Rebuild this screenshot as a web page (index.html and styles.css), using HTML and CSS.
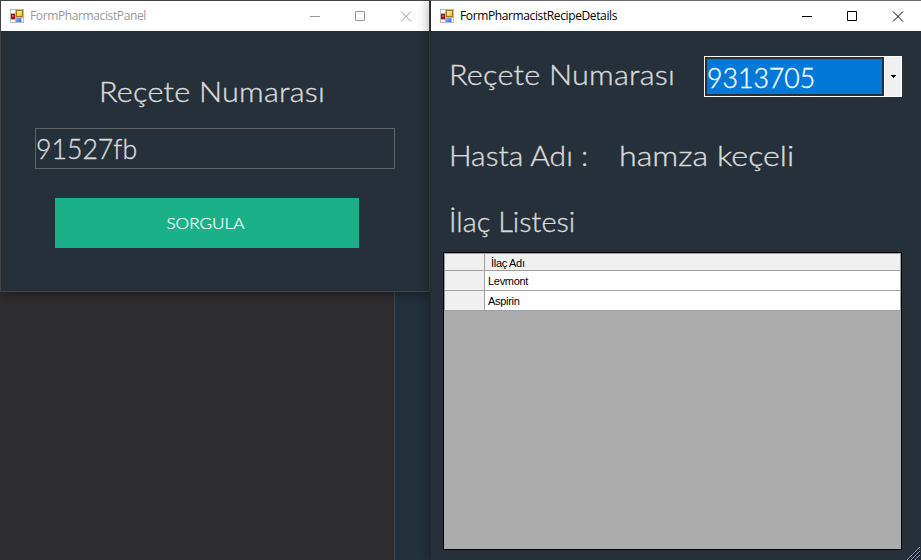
FILE: index.html
```html
<!DOCTYPE html>
<html lang="tr">
<head>
<meta charset="utf-8">
<title>FormPharmacist</title>
<link rel="stylesheet" href="styles.css">
</head>
<body>
<svg class="defs" aria-hidden="true">
  <defs>
    <linearGradient id="gold" x2="1" y2="1"><stop offset="0" stop-color="#fff3a0"/><stop offset="1" stop-color="#f5b820"/></linearGradient>
    <linearGradient id="blue" x2="1" y2="1"><stop offset="0" stop-color="#8cb8f8"/><stop offset="1" stop-color="#356fd8"/></linearGradient>
    <symbol id="form" viewBox="0 0 14 14">
      <path fill="#b9b9b9" d="M0 0h14v14H0z"/>
      <path fill="#fff" d="M1 1h4v3H1zM1 11h4v2H1zM12 9h1v4h-1zM1 5h4v5H1z"/>
      <path fill="#8f1712" d="M1 5h4v5H1z"/><path fill="#dd5345" d="M2 6h2v2H2z"/>
      <path fill="#a87512" d="M6 1h7v7H6z"/><path fill="url(#gold)" d="M7 2h5v5H7z"/>
      <path fill="url(#blue)" d="M6 9h5v4H6z"/>
    </symbol>
    <symbol id="controls" viewBox="0 0 102 11">
      <path fill="none" stroke="currentColor" d="M0 5.5h10M45.500.5h9v9h-9zM91 .5l10 10M101 .5l-10 10"/>
    </symbol>
  </defs>
</svg>
<main class="desktop">
  <div class="backdrop"></div>
  <section class="window panel">
    <header class="titlebar">
      <svg class="app-icon"><use href="#form"/></svg>
      <span class="title">FormPharmacistPanel</span>
      <svg class="controls"><use href="#controls"/></svg>
    </header>
    <div class="panel-body">
      <label class="text wide number-label">Reçete Numarası</label>
      <div class="text input">91527fb</div>
      <div class="button"><span class="wide button-label">SORGULA</span></div>
    </div>
  </section>
  <section class="window details">
    <header class="titlebar">
      <svg class="app-icon"><use href="#form"/></svg>
      <span class="title">FormPharmacistRecipeDetails</span>
      <svg class="controls"><use href="#controls"/></svg>
    </header>
    <div class="details-body">
      <div class="number-row">
        <label class="text wide number-label">Reçete Numarası</label>
        <div class="combo">
          <span class="text combo-value">9313705</span>
          <span class="combo-button"><svg width="5" height="3" shape-rendering="crispEdges"><path d="M0 0h5v1H0zM1 1h3v1H1zM2 2h1v1H2z"/></svg></span>
        </div>
      </div>
      <div class="text patient-row"><span class="wide patient-label">Hasta Adı :</span><span class="wide patient-name">hamza keçeli</span></div>
      <div class="text list-label"><span class="wide list-title">İlaç Listesi</span></div>
      <div class="grid">
        <div class="grid-row head"><span class="cell marker"></span><span class="cell">İlaç Adı</span></div>
        <div class="grid-row"><span class="cell marker"></span><span class="cell">Levmont</span></div>
        <div class="grid-row"><span class="cell marker"></span><span class="cell">Aspirin</span></div>
      </div>
    </div>
    <svg class="grip" viewBox="0 0 13 13"><path stroke="#000" d="M1 13L13 1M5 13l8-8M9 13l4-4"/><path stroke="#8ea5bb" d="M0 13L13 0M4 13l9-9M8 13l5-5"/></svg>
  </section>
</main>
</body>
</html>
```
FILE: styles.css
```css
* { box-sizing: border-box; }
body { margin: 0; }
.defs { position: absolute; width: 0; height: 0; }
.desktop { position: relative; width: 921px; height: 560px; overflow: hidden; background: #23313d; }
.backdrop { width: 395px; height: 560px; background: #2d2d30; border-right: 1px solid #444649; }
.window { position: absolute; top: 0; background: #25303b; border: 1px solid #434447; }
.panel { left: 0; width: 430px; height: 292px; box-shadow: 0 2px 10px rgba(0,0,0,.4); }
.details { left: 430px; width: 492px; height: 562px; border-color: #6c6a6c #25303b #25303b #26292c; box-shadow: 0 0 12px rgba(0,0,0,.4); }
.titlebar { display: flex; align-items: center; height: 30px; padding: 0 17px 0 9px; background: #fff; font: 12px/30px "Open Sans", "Noto Sans", sans-serif; color: #000; }
.app-icon { width: 14px; height: 14px; margin-right: 6px; shape-rendering: crispEdges; }
.title { letter-spacing: -0.38px; }
.controls { width: 102px; height: 11px; margin-left: auto; }
.panel .titlebar { color: #999; }

.text { font: 300 26.67px/40px Lato, "Open Sans", sans-serif; font-variant-ligatures: none; color: #d9d9d9; white-space: nowrap; -webkit-text-stroke: .35px currentColor; }
/* Widened letterforms, close to a geometric sans */
.wide { display: inline-block; transform-origin: 0 0; }
.number-label { letter-spacing: .2px; transform: scaleX(1.148); }
.panel-body { display: flex; flex-direction: column; align-items: flex-start; padding: 41px 34px 0; }
.panel-body .number-label { margin-left: 64px; }
.input { width: 360px; height: 41px; margin-top: 16px; border: 1px solid #626262; line-height: 40px; }
.button { width: 304px; height: 50px; margin: 29px 0 0 20px; padding-right: 4px; background: #1bb188; color: #fff; font: 300 16px/50px Lato, sans-serif; text-align: center; -webkit-text-stroke: .2px currentColor; }
.button-label { transform-origin: 50% 0; transform: scaleX(1.07); }

.details-body { padding: 24px 19px 0 12px; }
.number-row { display: flex; justify-content: space-between; align-items: flex-start; height: 81px; padding-left: 6px; }
.combo { display: flex; width: 198px; height: 41px; margin-top: 1px; border: 1px solid #fff; }
.combo-value { width: 175px; height: 35px; margin: 2px; background: #0078d7; color: #fff; line-height: 39px; }
.combo-button { display: flex; flex: 1; align-items: center; justify-content: center; background: #f0f0f0; border-left: 1px solid #fff; }
.patient-row { display: flex; height: 66px; padding-left: 6px; }
.patient-label { width: 170px; transform: scaleX(1.125); }
.patient-name { transform: scaleX(1.21); }
.list-label { height: 50px; padding-left: 6px; }
.list-title { transform: scaleX(1.085); }
.grid { width: 459px; height: 298px; background: #ababab; border: 1px solid #000; font: 11px/20px "Liberation Sans", Arial, sans-serif; color: #000; }
.grid-row { display: flex; height: 20px; background: #fff; border: solid #a0a0a0; border-width: 0 1px 1px; }
.head { height: 18px; line-height: 18px; background: #f0f0f0; border-top-width: 1px; }
.cell { padding-left: 3px; letter-spacing: -0.3px; }
.head .cell { padding-left: 6px; }
.grid-row .marker { width: 40px; padding: 0; background: #f0f0f0; border-right: 1px solid #a0a0a0; }
.grip { position: absolute; right: 1px; bottom: 1px; width: 13px; height: 13px; }
```
